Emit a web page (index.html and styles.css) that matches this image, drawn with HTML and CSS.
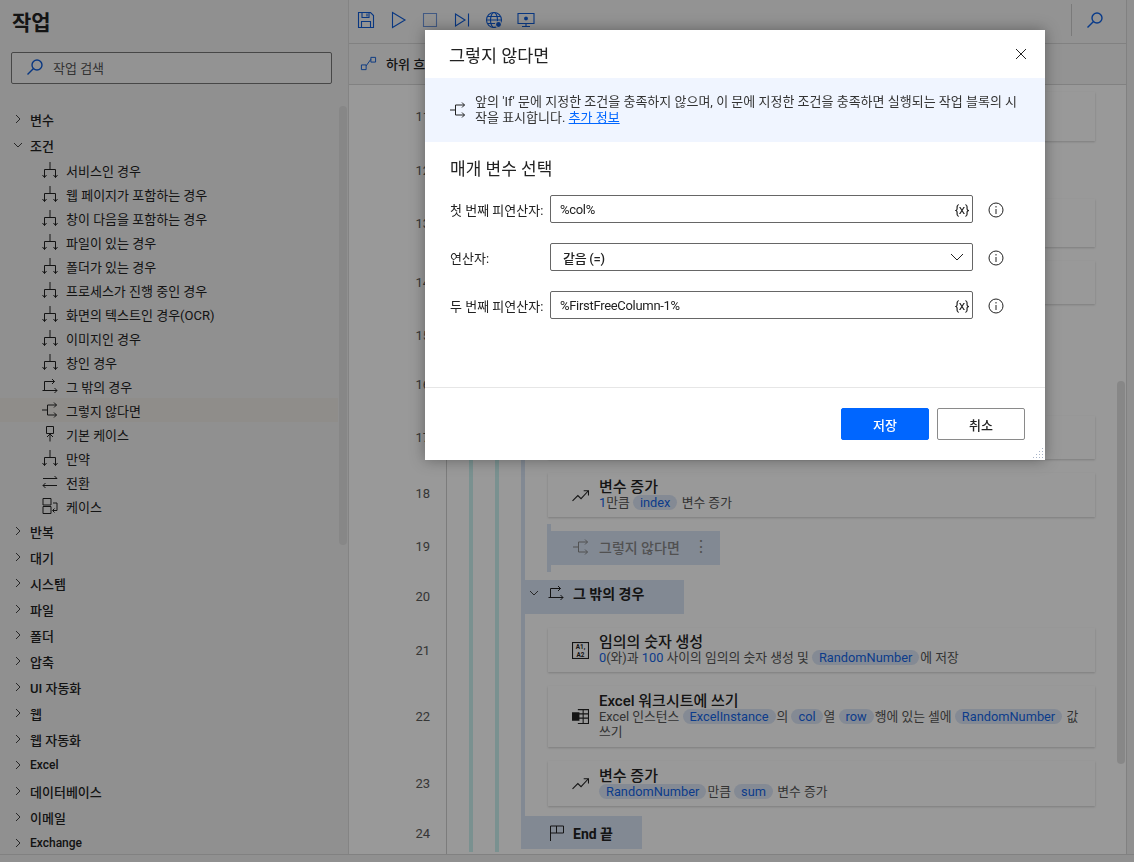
FILE: index.html
```html
<!DOCTYPE html>
<html lang="ko">
<head>
    <meta charset="UTF-8">
    <title>그렇지 않다면</title>
    <link rel="stylesheet" href="styles.css">
</head>
<body>

    <!-- icons -->
    <svg class="sprite" xmlns="http://www.w3.org/2000/svg">
        <symbol id="i-if" viewBox="0 0 16 16"><path d="M8 0v7.5M2.5 15.5v-8h11v8M.5 13l2 2.5 2-2.5M11.5 13l2 2.5 2-2.5"/></symbol>
        <symbol id="i-else" viewBox="0 0 16 16"><path d="M.5 12.5h14.5M2.5 12.5v-9h10M10 1l2.5 2.5L10 6M12.5 10l2.5 2.5-2.5 2.5"/></symbol>
        <symbol id="i-elseif" viewBox="0 0 16 16"><path d="M0 8h5.500M5.500 3h9M5.500 3v10h9M12 10.500l2.500 2.500-2.500 2.500M12 .5 14.500 3 12 5.500"/></symbol>
        <symbol id="i-default" viewBox="0 0 16 16"><path d="M4.500.5h7v7h-7zM8 15.500V8M5 11l3-3 3 3"/></symbol>
        <symbol id="i-switch" viewBox="0 0 16 16"><path d="M1 4.500h14M12.500 2 15 4.500M1 11.500h14M3.500 9 1 11.500 3.500 14"/></symbol>
        <symbol id="i-case" viewBox="0 0 16 16"><path d="M1 .5h8v6.500H1zM1 8.500h8v7H1zM11 5h4v7.500h-4M12.500 10.500l-2 2 2 2"/></symbol>
        <symbol id="i-trend" viewBox="0 0 16 16"><path d="M.5 13l5-5 3 3 6.500-7M11 3.500h4.500V8"/></symbol>
        <symbol id="i-chev-r" viewBox="0 0 10 10"><path d="M3 1l4 4-4 4"/></symbol>
        <symbol id="i-chev-d" viewBox="0 0 10 10"><path d="M1 3l4 4 4-4"/></symbol>
        <symbol id="i-search" viewBox="0 0 16 16"><circle cx="10" cy="6" r="5"/><path d="M6.500 9.500 .5 15.500"/></symbol>
    </svg>

    <div class="app">
        <div class="content">
            <!-- 작업 -->
            <aside class="sidebar">
                <h1 class="side-title">작업</h1>
                <div class="side-search">
                    <svg class="ico ico-blue search-ico"><use href="#i-search"/></svg>
                    <span>작업 검색</span>
                </div>
                <div class="tree">
                    <div class="group"><svg class="chev"><use href="#i-chev-r"/></svg>변수</div>
                    <div class="group"><svg class="chev"><use href="#i-chev-d"/></svg>조건</div>
                    <div class="leaf"><svg class="ico"><use href="#i-if"/></svg>서비스인 경우</div>
                    <div class="leaf"><svg class="ico"><use href="#i-if"/></svg>웹 페이지가 포함하는 경우</div>
                    <div class="leaf"><svg class="ico"><use href="#i-if"/></svg>창이 다음을 포함하는 경우</div>
                    <div class="leaf"><svg class="ico"><use href="#i-if"/></svg>파일이 있는 경우</div>
                    <div class="leaf"><svg class="ico"><use href="#i-if"/></svg>폴더가 있는 경우</div>
                    <div class="leaf"><svg class="ico"><use href="#i-if"/></svg>프로세스가 진행 중인 경우</div>
                    <div class="leaf"><svg class="ico"><use href="#i-if"/></svg>화면의 텍스트인 경우(OCR)</div>
                    <div class="leaf"><svg class="ico"><use href="#i-if"/></svg>이미지인 경우</div>
                    <div class="leaf"><svg class="ico"><use href="#i-if"/></svg>창인 경우</div>
                    <div class="leaf"><svg class="ico"><use href="#i-else"/></svg>그 밖의 경우</div>
                    <div class="leaf leaf-active"><svg class="ico"><use href="#i-elseif"/></svg>그렇지 않다면</div>
                    <div class="leaf"><svg class="ico"><use href="#i-default"/></svg>기본 케이스</div>
                    <div class="leaf"><svg class="ico"><use href="#i-if"/></svg>만약</div>
                    <div class="leaf"><svg class="ico"><use href="#i-switch"/></svg>전환</div>
                    <div class="leaf"><svg class="ico"><use href="#i-case"/></svg>케이스</div>
                    <div class="group"><svg class="chev"><use href="#i-chev-r"/></svg>반복</div>
                    <div class="group"><svg class="chev"><use href="#i-chev-r"/></svg>대기</div>
                    <div class="group"><svg class="chev"><use href="#i-chev-r"/></svg>시스템</div>
                    <div class="group"><svg class="chev"><use href="#i-chev-r"/></svg>파일</div>
                    <div class="group"><svg class="chev"><use href="#i-chev-r"/></svg>폴더</div>
                    <div class="group"><svg class="chev"><use href="#i-chev-r"/></svg>압축</div>
                    <div class="group"><svg class="chev"><use href="#i-chev-r"/></svg>UI 자동화</div>
                    <div class="group"><svg class="chev"><use href="#i-chev-r"/></svg>웹</div>
                    <div class="group"><svg class="chev"><use href="#i-chev-r"/></svg>웹 자동화</div>
                    <div class="group group-en"><svg class="chev"><use href="#i-chev-r"/></svg>Excel</div>
                    <div class="group"><svg class="chev"><use href="#i-chev-r"/></svg>데이터베이스</div>
                    <div class="group"><svg class="chev"><use href="#i-chev-r"/></svg>이메일</div>
                    <div class="group group-en"><svg class="chev"><use href="#i-chev-r"/></svg>Exchange</div>
                </div>
                <div class="side-thumb"></div>
            </aside>

            <main class="main">
                <div class="toolbar">
                    <svg class="tool" viewBox="0 0 18 18"><path d="M1.500 1.500h12l3 3v12h-15zM5 1.500v5h7v-5M4.500 16.500v-6h9v6M10 2.500v3"/></svg>
                    <svg class="tool" viewBox="0 0 18 18"><path d="M3.500 1.500 16 9 3.500 16.500z"/></svg>
                    <svg class="tool tool-soft" viewBox="0 0 18 18"><path d="M2.500 2.500h13v13h-13z"/></svg>
                    <svg class="tool" viewBox="0 0 18 18"><path d="M2.500 3 12 9l-9.500 6zM15.500 2.500v13"/></svg>
                    <svg class="tool" viewBox="0 0 18 18"><circle cx="9" cy="9" r="7.500"/><ellipse cx="9" cy="9" rx="3.500" ry="7.500"/><path d="M1.500 9h15M2.500 5.500h13M2.500 12.500h13"/><circle class="fill" cx="13.500" cy="13.500" r="3"/></svg>
                    <svg class="tool" viewBox="0 0 18 18"><path d="M1 2.500h16v10H1zM9 12.500v3M5 15.500h8"/><circle class="fill" cx="9" cy="7.500" r="2.500"/></svg>
                    <div class="tool-end">
                        <svg class="ico ico-blue end-search"><use href="#i-search"/></svg>
                    </div>
                </div>
                <div class="subbar">
                    <svg class="sub-ico" viewBox="0 0 18 18"><path d="M1.500 10.500h5v5h-5zM11.500 2.500h5v5h-5zM6.500 11.500l5-7"/></svg>
                    <span>하위 흐름</span>
                </div>

                <div class="rows">
                    <div class="guide guide-a"></div>
                    <div class="guide guide-b"></div>
                    <div class="guide guide-c"></div>

                    <div class="row h63"><div class="num">11</div><div class="card"></div></div>
                    <div class="row h44"><div class="num">12</div></div>
                    <div class="row h62"><div class="num">13</div><div class="card"></div></div>
                    <div class="row h57"><div class="num">14</div><div class="card"></div></div>
                    <div class="row h48"><div class="num">15</div></div>
                    <div class="row h50"><div class="num">16</div></div>
                    <div class="row h57"><div class="num">17</div><div class="card"></div></div>

                    <div class="row h58"><div class="num num-up">18</div>
                        <div class="card">
                            <svg class="ico card-ico"><use href="#i-trend"/></svg>
                            <div class="card-text">
                                <div class="card-title">변수 증가</div>
                                <div class="card-sub"><b class="val">1</b>만큼 <span class="chip">index</span> 변수 증가</div>
                            </div>
                        </div>
                    </div>

                    <div class="row h48"><div class="num num-up">19</div>
                        <div class="tag-off">
                            <svg class="ico"><use href="#i-elseif"/></svg>
                            <span>그렇지 않다면</span>
                            <span class="dots">⋮</span>
                        </div>
                    </div>

                    <div class="row h49"><div class="num">20</div>
                        <div class="block-head">
                            <svg class="chev"><use href="#i-chev-d"/></svg>
                            <svg class="ico"><use href="#i-else"/></svg>
                            <span>그 밖의 경우</span>
                        </div>
                    </div>

                    <div class="row h58"><div class="num">21</div>
                        <div class="card">
                            <svg class="card-ico cell-ico" viewBox="0 0 16 16"><rect x=".5" y=".5" width="15" height="15"/><text x="8" y="7" class="cell-txt">A1,</text><text x="8" y="14" class="cell-txt">A2</text></svg>
                            <div class="card-text">
                                <div class="card-title">임의의 숫자 생성</div>
                                <div class="card-sub"><b class="val">0</b>(와)과 <b class="val">100</b> 사이의 임의의 숫자 생성 및 <span class="chip">RandomNumber</span>에 저장</div>
                            </div>
                        </div>
                    </div>

                    <div class="row h75"><div class="num">22</div>
                        <div class="card">
                            <svg class="ico card-ico" viewBox="0 0 16 16"><path d="M5.500 1.500h10v13h-10M5.500 5.500h10M5.500 9.500h10M10.500 1.500v13"/><path class="fill-dark" d="M0 4h7v8H0z"/></svg>
                            <div class="card-text">
                                <div class="card-title">Excel 워크시트에 쓰기</div>
                                <div class="card-sub">Excel 인스턴스 <span class="chip">ExcelInstance</span>의 <span class="chip">col</span>열 <span class="chip">row</span>행에 있는 셀에 <span class="chip">RandomNumber</span> 값 쓰기</div>
                            </div>
                        </div>
                    </div>

                    <div class="row h59"><div class="num">23</div>
                        <div class="card">
                            <svg class="ico card-ico"><use href="#i-trend"/></svg>
                            <div class="card-text">
                                <div class="card-title">변수 증가</div>
                                <div class="card-sub"><span class="chip">RandomNumber</span>만큼 <span class="chip">sum</span> 변수 증가</div>
                            </div>
                        </div>
                    </div>

                    <div class="row h41"><div class="num">24</div>
                        <div class="block-end">
                            <svg class="ico" viewBox="0 0 16 16"><path d="M1.500 16V1h13v7h-13"/><path d="M7.500 1v7"/></svg>
                            <span>End 끝</span>
                        </div>
                    </div>

                    <div class="main-thumb"></div>
                </div>
            </main>
            <div class="strip"></div>
        </div>
        <div class="statusbar"></div>
    </div>

    <!-- 대화 상자 -->
    <div class="overlay"></div>
    <div class="dialog">
        <div class="dlg-head">
            <h2>그렇지 않다면</h2>
            <svg class="dlg-close" viewBox="0 0 12 12"><path d="M1 1l10 10M11 1 1 11"/></svg>
        </div>
        <div class="dlg-info">
            <svg class="ico"><use href="#i-elseif"/></svg>
            <p>앞의 'If' 문에 지정한 조건을 충족하지 않으며, 이 문에 지정한 조건을 충족하면 실행되는 작업 블록의 시<br>작을 표시합니다. <a href="#">추가 정보</a></p>
        </div>
        <div class="dlg-body">
            <h3>매개 변수 선택</h3>
            <div class="form">
                <label>첫 번째 피연산자:</label>
                <div class="field"><span>%col%</span><em>{x}</em></div>
                <svg class="info" viewBox="0 0 16 16"><circle cx="8" cy="8" r="7"/><path d="M8 7v5M8 4v1.500"/></svg>

                <label>연산자:</label>
                <div class="field field-select"><span>같음 (=)</span><svg class="sel-chev" viewBox="0 0 14 8"><path d="M1 1l6 6 6-6"/></svg></div>
                <svg class="info" viewBox="0 0 16 16"><circle cx="8" cy="8" r="7"/><path d="M8 7v5M8 4v1.500"/></svg>

                <label>두 번째 피연산자:</label>
                <div class="field"><span>%FirstFreeColumn-1%</span><em>{x}</em></div>
                <svg class="info" viewBox="0 0 16 16"><circle cx="8" cy="8" r="7"/><path d="M8 7v5M8 4v1.500"/></svg>
            </div>
        </div>
        <div class="dlg-foot">
            <button class="btn btn-primary">저장</button>
            <button class="btn">취소</button>
        </div>
        <div class="grip"></div>
    </div>

</body>
</html>
```

FILE: styles.css
```css
* {
    box-sizing: border-box;
}
html, body {
    margin: 0;
    height: 100%;
    overflow: hidden;
}
body {
    font-family: Roboto, "Noto Sans CJK KR", sans-serif;
    font-size: 13px;
    color: #222;
    background: #fff;
}
.sprite {
    display: none;
}
svg {
    fill: none;
    stroke: #222;
    stroke-width: 1;
}
.ico {
    width: 16px;
    height: 16px;
    flex: none;
}
.ico-blue {
    stroke: #0f62e6;
    stroke-width: 1.4;
}
.chev {
    width: 10px;
    height: 10px;
    flex: none;
    stroke: #444;
}

.app {
    display: flex;
    flex-direction: column;
    height: 862px;
}
.content {
    display: flex;
    flex: 1;
    min-height: 0;
}
.statusbar {
    height: 8px;
    background: #f0f0f0;
    border-top: 1px solid #d8d8d8;
}
.strip {
    width: 8px;
    background: #f0f0f0;
    border-left: 1px solid #d8d8d8;
}

/* sidebar */
.sidebar {
    position: relative;
    width: 349px;
    flex: none;
    background: #f0f0f0;
    border-right: 1px solid #dcdcdc;
    overflow: hidden;
}
.side-title {
    margin: 0;
    padding: 8px 12px 0;
    height: 52px;
    font-size: 21px;
    line-height: 30px;
    font-weight: 700;
}
.side-search {
    display: flex;
    align-items: center;
    gap: 10px;
    margin-left: 11px;
    width: 321px;
    height: 32px;
    padding: 0 0 2px 15px;
    background: #f6f6f6;
    border: 1px solid #777;
    border-radius: 2px;
    color: #555;
}
.search-ico {
    stroke: #0f5cd8;
}
.tree {
    margin-top: 22px;
}
.group {
    display: flex;
    align-items: center;
    height: 26px;
    padding-left: 13px;
    gap: 7px;
    font-weight: 500;
}
.group-en {
    font-size: 12px;
}
.leaf {
    display: flex;
    align-items: center;
    height: 24px;
    padding-left: 42px;
    gap: 8px;
}
.leaf-active {
    width: 338px;
    background: #efebe6;
}
.side-thumb {
    position: absolute;
    left: 339px;
    top: 106px;
    width: 8px;
    height: 439px;
    border-radius: 4px;
    background: #e2e2e2;
}

/* main */
.main {
    flex: 1;
    min-width: 0;
    display: flex;
    flex-direction: column;
    background: #fff;
}
.toolbar {
    display: flex;
    align-items: center;
    gap: 14px;
    height: 44px;
    padding: 0 7px 4px 8px;
    border-bottom: 1px solid #d8d8d8;
    background: #f5f5f5;
}
.tool {
    width: 18px;
    height: 18px;
    stroke: #0f5cd8;
    stroke-width: 1.1;
}
.tool-soft {
    stroke: #6f97dc;
}
.tool .fill {
    fill: #0f5cd8;
    stroke: #f5f5f5;
}
.tool-end {
    display: flex;
    align-items: center;
    height: 32px;
    margin-left: auto;
    margin-right: 16px;
    padding-left: 15px;
    border-left: 1px solid #ccc;
}
.end-search {
    width: 16px;
    height: 16px;
}
.subbar {
    display: flex;
    align-items: center;
    gap: 9px;
    height: 41px;
    padding: 0 0 2px 11px;
    border-bottom: 1px solid #d8d8d8;
    background: #f5f5f5;
    font-weight: 500;
}
.sub-ico {
    width: 17px;
    height: 17px;
    stroke: #0f5cd8;
}

.rows {
    position: relative;
    flex: 1;
    min-height: 0;
    overflow: hidden;
}
.row {
    display: flex;
    align-items: center;
}
.h41 { height: 41px; }
.h44 { height: 44px; }
.h48 { height: 48px; }
.h49 { height: 49px; }
.h50 { height: 50px; }
.h57 { height: 57px; }
.h58 { height: 58px; }
.h59 { height: 59px; }
.h62 { height: 62px; }
.h63 { height: 63px; }
.h75 { height: 75px; }
.num {
    width: 98px;
    flex: none;
    align-self: stretch;
    display: flex;
    align-items: center;
    justify-content: flex-end;
    padding-right: 16px;
    border-right: 1px solid #cfcfcf;
    font-size: 13px;
    color: #5a5a5a;
}
.num-up {
    padding-bottom: 4px;
}
.guide {
    position: absolute;
    top: 0;
    width: 4px;
}
.guide-a {
    left: 120px;
    bottom: 2px;
    background: #ccf2f0;
}
.guide-b {
    left: 146px;
    bottom: 2px;
    background: #ccf2f0;
}
.guide-c {
    left: 172px;
    height: 734px;
    background: #d9e4f6;
}
.card {
    display: flex;
    align-items: center;
    align-self: stretch;
    margin: 7px 0 7px 101px;
    width: 547px;
    padding: 0 14px 0 24px;
    background: #fff;
    box-shadow: 0 1px 2px rgba(0, 0, 0, .18);
}
.card-ico {
    width: 17px;
    height: 17px;
    flex: none;
    margin-right: 10px;
}
.cell-txt {
    font-size: 6px;
    font-weight: 700;
    text-anchor: middle;
    fill: #222;
    stroke: none;
}
.fill-dark {
    fill: #222;
    stroke: none;
}
.card-text {
    min-width: 0;
    padding-bottom: 1px;
}
.card-title {
    font-size: 15px;
    line-height: 16px;
    font-weight: 500;
}
.card-sub {
    font-size: 12.800px;
    line-height: 15px;
    color: #555;
}
.val {
    font-weight: 400;
    color: #1465e8;
}
.chip {
    display: inline-block;
    padding: 0 7px;
    margin-right: 1px;
    line-height: 15px;
    border-radius: 8px;
    background: #dde7f7;
    color: #1465e8;
}
.tag-off {
    display: flex;
    align-items: center;
    align-self: stretch;
    margin-left: 100px;
    border-left: 4px solid #d9e4f6;
    background: linear-gradient(#fff 7px, #d9e4f6 7px, #d9e4f6 41px, #fff 41px);
    width: 173px;
    gap: 10px;
    padding: 0 0 3px 22px;
    font-size: 14px;
    font-weight: 500;
    color: #888;
}
.tag-off svg {
    stroke: #888;
}
.dots {
    margin-left: 3px;
    font-size: 16px;
}
.block-head {
    display: flex;
    align-items: center;
    gap: 9px;
    height: 34px;
    width: 159px;
    margin-left: 78px;
    padding: 0 0 8px 4px;
    background: #d9e4f6;
    font-size: 14px;
    font-weight: 700;
}
.block-end {
    display: flex;
    align-items: center;
    gap: 8px;
    height: 33px;
    width: 121px;
    margin-left: 74px;
    padding-left: 28px;
    margin-top: -2px;
    background: #d9e4f6;
    font-size: 14px;
    font-weight: 700;
}
.main-thumb {
    position: absolute;
    left: 768px;
    top: 296px;
    width: 8px;
    height: 383px;
    border-radius: 4px;
    background: #e2e2e2;
}

/* dialog */
.overlay {
    position: fixed;
    inset: 0;
    background: rgba(0, 0, 0, .4);
}
.dialog {
    position: absolute;
    left: 425px;
    top: 30px;
    width: 620px;
    height: 430px;
    display: flex;
    flex-direction: column;
    background: #fff;
    box-shadow: 0 0 14px rgba(0, 0, 0, .35);
}
.dlg-head {
    display: flex;
    align-items: center;
    justify-content: space-between;
    height: 48px;
    flex: none;
    padding: 2px 18px 2px 24px;
}
.dlg-head h2 {
    margin: 0;
    font-size: 17.400px;
    font-weight: 400;
}
.dlg-close {
    width: 12px;
    height: 12px;
}
.dlg-info {
    display: flex;
    align-items: center;
    gap: 9px;
    height: 64px;
    flex: none;
    padding: 0 16px 0 25px;
    background: #f0f5ff;
}
.dlg-info p {
    margin: 0;
    font-size: 13px;
    line-height: 16px;
    color: #333;
}
.dlg-info a {
    color: #0066ff;
}
.dlg-body {
    flex: 1;
    padding: 14px 24px 0 25px;
}
.dlg-body h3 {
    margin: 0 0 12px;
    height: 27px;
    line-height: 27px;
    font-size: 17px;
    font-weight: 400;
}
.form {
    display: grid;
    grid-template-columns: 100px 423px 47px;
    row-gap: 20px;
    align-items: center;
}
.form label {
    font-size: 13px;
    white-space: nowrap;
}
.field {
    display: flex;
    align-items: center;
    justify-content: space-between;
    height: 28px;
    padding: 0 3px 0 9px;
    border: 1px solid #666;
    border-radius: 2px;
    letter-spacing: -.3px;
}
.field em {
    font-style: normal;
    font-size: 13px;
}
.field-select {
    padding: 0 8px 0 12px;
    font-weight: 500;
}
.sel-chev {
    width: 14px;
    height: 8px;
}
.info {
    width: 16px;
    height: 16px;
    margin: 2px 0 0 15px;
}
.dlg-foot {
    display: flex;
    justify-content: flex-end;
    gap: 8px;
    height: 73px;
    flex: none;
    padding: 20px 20px 0 0;
    border-top: 1px solid #e6e6e6;
}
.btn {
    width: 88px;
    height: 32px;
    font-family: inherit;
    font-size: 13px;
    font-weight: 500;
    color: #222;
    background: #fff;
    border: 1px solid #8a8a8a;
    border-radius: 2px;
}
.btn-primary {
    color: #fff;
    background: #0066ff;
    border-color: #0066ff;
}
.grip {
    position: absolute;
    right: 2px;
    bottom: 2px;
    width: 11px;
    height: 11px;
    background: radial-gradient(circle, #a8b4c8 1px, transparent 1px) 0 0 / 3px 3px;
    clip-path: polygon(100% 0, 100% 100%, 0 100%);
}
```
